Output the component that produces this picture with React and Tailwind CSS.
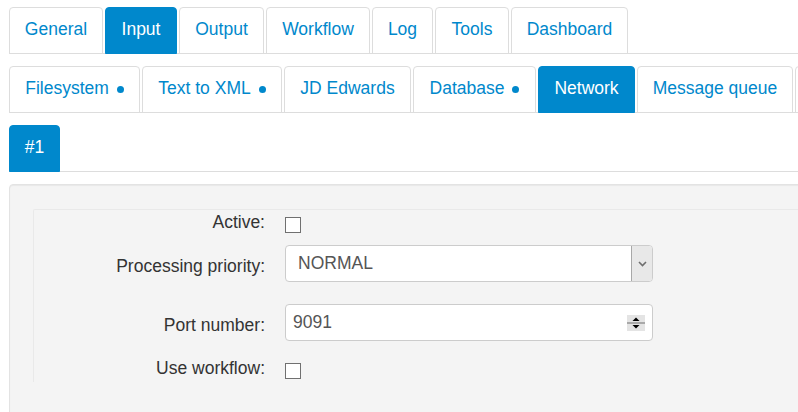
import React from 'react';
import clsx from 'clsx';

const mainTabs = [
    { label: 'General', w: 'w-[94px]' },
    { label: 'Input', w: 'w-[72px]' },
    { label: 'Output', w: 'w-[85px]' },
    { label: 'Workflow', w: 'w-[104px]' },
    { label: 'Log', w: 'w-[61px]' },
    { label: 'Tools', w: 'w-[74px]' },
    { label: 'Dashboard', w: 'w-[117px]' },
];

const inputTabs = [
    { label: 'Filesystem', dot: true, w: 'w-[131px]' },
    { label: 'Text to XML', dot: true, w: 'w-[140px]' },
    { label: 'JD Edwards', w: 'w-[127px]' },
    { label: 'Database', dot: true, w: 'w-[123px]' },
    { label: 'Network', w: 'w-[97px]' },
    { label: 'Message queue', w: 'w-[156px]' },
    { label: '', w: 'w-[40px]' },
];

const Tab = ({ label, dot, active, w }) => (
    <li
        className={clsx(
            'shrink-0 flex justify-center mr-[2px] -mb-px border rounded-t-[4px] pt-[9px] pb-[11px] leading-[25px] whitespace-nowrap',
            w,
            active ? 'bg-[#0088cc] border-[#0088cc] text-white' : 'border-[#ddd] text-[#0088cc]'
        )}
    >
        <span>
            {label}
            {dot && <span className="inline-block ml-[8px] w-[7px] h-[7px] rounded-full bg-[#0088cc] relative top-[-1px]" />}
        </span>
        {!label && <span>&nbsp;</span>}
    </li>
);

const TabRow = ({ children, className }) => (
    <ul className={clsx('flex border-b border-[#ddd] whitespace-nowrap', className)}>{children}</ul>
);

const Checkbox = () => (
    <div className="mt-[7px] w-[16px] h-[16px] border border-[#707070] bg-white" />
);

const App = () => {
    return (
        <div className="w-[798px] h-[412px] overflow-hidden bg-white pl-[9px] pt-[7px] font-['Liberation_Sans',Arial,sans-serif] text-[17.5px] leading-[25px]">
            <TabRow>
                {mainTabs.map(t => (
                    <Tab key={t.label} label={t.label} w={t.w} active={t.label === 'Input'} />
                ))}
            </TabRow>

            <TabRow className="mt-[12px]">
                {inputTabs.map(t => (
                    <Tab key={t.label} label={t.label} dot={t.dot} w={t.w} active={t.label === 'Network'} />
                ))}
            </TabRow>

            <TabRow className="mt-[12px]">
                <Tab label="#1" w="w-[51px]" active />
            </TabRow>

            {/* settings panel */}
            <div className="mt-[12px] mr-[-30px] h-[260px] bg-[#f4f4f4] border border-[#e3e3e3] rounded-[4px] shadow-[inset_0_1px_1px_rgba(0,0,0,0.05)] pt-[24px] pl-[23px]">
                <div className="border-t border-l border-[#e9e9e9] rounded-tl-[2px] pb-[1px] text-[#333]">
                    <div className="flex h-[25px]">
                        <div className="w-[231px] text-right">Active:</div>
                        <div className="ml-[20px]"><Checkbox /></div>
                    </div>

                    <div className="flex h-[37px] mt-[10px]">
                        <div className="w-[231px] text-right pt-[9px]">Processing priority:</div>
                        <div className="ml-[20px] w-[368px] h-[37px] flex items-center border border-[#ccc] rounded-[4px] bg-white text-[#555]">
                            <span className="pl-[12px]">NORMAL</span>
                            <div className="ml-auto w-[21px] h-full flex items-center justify-center bg-[#e8e8e8] border-l border-[#a8a8a8] rounded-r-[3px]">
                                <svg width="9" height="6" viewBox="0 0 9 6">
                                    <path d="M1 1 L4.5 4.5 L8 1" fill="none" stroke="#6e6e6e" strokeWidth="1.6" />
                                </svg>
                            </div>
                        </div>
                    </div>

                    <div className="flex h-[37px] mt-[22px]">
                        <div className="w-[231px] text-right pt-[9px]">Port number:</div>
                        <div className="ml-[20px] w-[368px] h-[37px] flex items-center border border-[#ccc] rounded-[4px] bg-white text-[#555]">
                            <span className="pl-[7px]">9091</span>
                            <svg className="ml-auto mr-[7px]" width="18" height="16" viewBox="0 0 18 16">
                                <rect width="18" height="16" fill="#e4e4e4" />
                                <rect y="7" width="18" height="2" fill="#a9a9a9" />
                                <path d="M9 2.5 L12.5 6 L5.5 6Z" fill="#000" />
                                <path d="M5.5 10 L12.5 10 L9 13.5Z" fill="#000" />
                            </svg>
                        </div>
                    </div>

                    <div className="flex h-[25px] mt-[15px]">
                        <div className="w-[231px] text-right">Use workflow:</div>
                        <div className="ml-[20px]"><Checkbox /></div>
                    </div>
                </div>
            </div>
        </div>
    );
};

export default App;
